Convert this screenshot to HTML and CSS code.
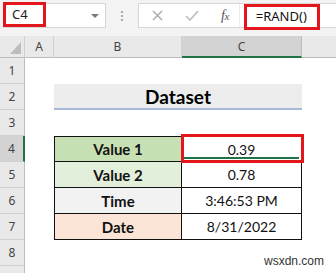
FILE: index.html
```html
<!DOCTYPE html>
<html>
<head>
<meta charset="utf-8">
<link rel="stylesheet" href="styles.css">
</head>
<body>
<div class="app">
  <div class="toolbar">
    <div class="namebox">
      <span class="name">C4</span>
      <span class="arrow"></span>
    </div>
    <div class="dots">
      <svg width="4" height="12" viewBox="0 0 4 12"><circle cx="2" cy="2" r="1.1" fill="#9a9a9a"/><circle cx="2" cy="6" r="1.1" fill="#9a9a9a"/><circle cx="2" cy="10" r="1.1" fill="#9a9a9a"/></svg>
    </div>
    <div class="fbar">
      <span class="ico-x"><svg width="11" height="11" viewBox="0 0 11 11"><path d="M1 1L10 10M10 1L1 10" stroke="#a8a8a8" stroke-width="1.4" fill="none"/></svg></span>
      <span class="ico-check"><svg width="14" height="11" viewBox="0 0 14 11"><path d="M1 6L5 10L13 1" stroke="#bdbdbd" stroke-width="1.6" fill="none"/></svg></span>
      <span class="fx">f<span class="fx-x">x</span></span>
      <span class="sep"></span>
      <div class="formula">=RAND()</div>
    </div>
  </div>

  <div class="sheet">
    <div class="ch corner"><span class="tri"></span></div>
    <div class="ch">A</div>
    <div class="ch">B</div>
    <div class="ch sel">C</div>
    <div class="ch last"></div>

    <div class="rh">1</div><div></div><div></div><div></div><div></div>

    <div class="rh">2</div><div></div><div class="title">Dataset</div><div></div>

    <div class="rh">3</div><div></div><div></div><div></div><div></div>

    <div class="rh rsel">4</div><div></div><div class="lbl first green-d">Value 1</div><div class="val first active">0.39</div><div></div>

    <div class="rh">5</div><div></div><div class="lbl green">Value 2</div><div class="val">0.78</div><div></div>

    <div class="rh">6</div><div></div><div class="lbl grey">Time</div><div class="val">3:46:53 PM</div><div></div>

    <div class="rh">7</div><div></div><div class="lbl peach">Date</div><div class="val">8/31/2022</div><div></div>

    <div class="rh">8</div><div></div><div></div><div></div><div class="wm-cell"><span class="wm">wsxdn.com</span></div>

    <div class="rh"></div><div></div><div></div><div></div><div></div>
  </div>
</div>
</body>
</html>
```

FILE: styles.css
```css
* { box-sizing: border-box; }
html, body { margin: 0; padding: 0; }
body { width: 336px; height: 273px; overflow: hidden; background: #fff; }

.app { width: 336px; height: 273px; overflow: hidden; position: relative; }

.toolbar {
  height: 36px;
  background: #f3f3f3;
  display: flex;
  align-items: flex-start;
  padding-top: 3px;
}

.namebox {
  margin-left: 3px;
  width: 103px;
  height: 25px;
  background: #fff;
  border: 1px solid #d6d6d6;
  display: flex;
  align-items: center;
}
.name {
  align-self: flex-start;
  margin: -2px 0 0 -1px;
  width: 43px;
  height: 25px;
  border: 3px solid #e3161b;
  padding-left: 6px;
  font-family: "Noto Sans", sans-serif;
  font-size: 13px;
  line-height: 19px;
  color: #222;
}
.arrow {
  margin-left: auto;
  margin-right: 6px;
  width: 0; height: 0;
  border-left: 4px solid transparent;
  border-right: 4px solid transparent;
  border-top: 4px solid #7a7a7a;
}

.dots {
  width: 32px;
  height: 25px;
  display: flex;
  align-items: center;
  justify-content: center;
}

.fbar {
  flex: 1;
  height: 25px;
  background: #fff;
  border: 1px solid #d6d6d6;
  border-right: none;
  display: flex;
  align-items: center;
}
.ico-x { margin-left: 13px; display: flex; }
.ico-check { margin-left: 22px; display: flex; }
.fx {
  margin-left: 22px;
  font-family: "Liberation Serif", serif;
  font-style: italic;
  font-size: 14px;
  color: #555;
  letter-spacing: -0.5px;
}
.fx-x { font-size: 11px; }
.sep {
  margin-left: 10px;
  width: 1px;
  height: 23px;
  background: #ececec;
}
.formula {
  align-self: flex-start;
  margin-left: 4px;
  width: 76px;
  height: 26px;
  border: 3px solid #e3161b;
  padding-left: 9px;
  font-family: "Noto Sans", sans-serif;
  font-size: 13px;
  line-height: 19px;
  color: #111;
}

.sheet {
  display: grid;
  grid-template-columns: 25px 29px 128px 120px 1fr;
  grid-template-rows: 22px repeat(9, 26px);
  font-family: "Lato", sans-serif;
}

.ch {
  background: #e9e9e9;
  border-right: 1px solid #d0d0d0;
  border-bottom: 1px solid #bdbdbd;
  display: flex;
  align-items: center;
  justify-content: center;
  font-family: "Noto Sans", sans-serif;
  font-size: 12px;
  color: #444;
}
.ch.sel {
  background: #d3d3d3;
  border-bottom: 2px solid #217346;
  border-right-color: #bdbdbd;
}
.ch.last { border-right: none; }
.corner { justify-content: flex-end; align-items: flex-end; padding: 0 3px 3px 0; }
.tri {
  width: 0; height: 0;
  border-left: 11px solid transparent;
  border-bottom: 12px solid #bdbdbd;
}

.rh {
  background: #e9e9e9;
  border-right: 1px solid #bdbdbd;
  border-bottom: 1px solid #d0d0d0;
  display: flex;
  align-items: center;
  justify-content: center;
  font-family: "Noto Sans", sans-serif;
  font-size: 12px;
  color: #444;
}
.rh.rsel {
  background: #d3d3d3;
  border-right: 2px solid #217346;
}

.title {
  grid-column: span 2;
  background: #ededed;
  border-bottom: 2px solid #a9b9dd;
  display: flex;
  align-items: center;
  justify-content: center;
  font-weight: bold;
  font-size: 19px;
  color: #000;
}

.lbl, .val {
  display: flex;
  align-items: center;
  justify-content: center;
  border-bottom: 1px solid #111;
  border-right: 1px solid #111;
  color: #111;
}
.lbl {
  border-left: 1px solid #111;
  font-weight: bold;
  font-size: 15px;
}
.val { font-size: 14px; }
.first { border-top: 1px solid #111; }

.green-d { background: #c6e0b4; }
.green { background: #e2efda; }
.grey { background: #f2f2f2; }
.peach { background: #fce4d6; }

.active { position: relative; }
.active::before {
  content: "";
  position: absolute;
  left: 2px; right: 2px; bottom: 2px;
  height: 2px;
  background: #217346;
}
.active::after {
  content: "";
  position: absolute;
  left: -1px; right: -3px; top: -3px; bottom: -2px;
  border: 3px solid #e3161b;
}

.wm-cell { position: relative; }
.wm {
  position: absolute;
  right: 12px;
  top: 14px;
  font-family: "Liberation Sans", sans-serif;
  font-size: 12px;
  color: #333;
}
```
